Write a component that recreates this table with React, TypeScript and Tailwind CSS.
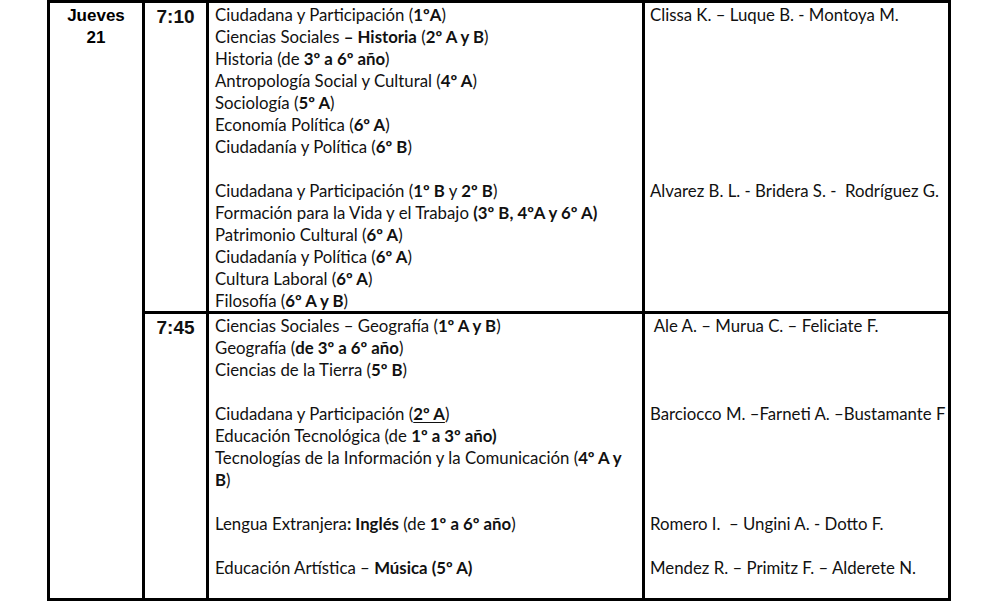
import type { ReactNode } from 'react';

type Line = { subject?: ReactNode; teacher?: string };

const firstBlock: Line[] = [
  {
    subject: (
      <>
        Ciudadana y Participación (<b>1ºA</b>)
      </>
    ),
    teacher: 'Clissa K. – Luque B. - Montoya M.',
  },
  {
    subject: (
      <>
        Ciencias Sociales <b>– Historia</b> (<b>2º A y B</b>)
      </>
    ),
  },
  {
    subject: (
      <>
        Historia (de <b>3º a 6º año</b>)
      </>
    ),
  },
  {
    subject: (
      <>
        Antropología Social y Cultural (<b>4º A</b>)
      </>
    ),
  },
  {
    subject: (
      <>
        Sociología (<b>5º A</b>)
      </>
    ),
  },
  {
    subject: (
      <>
        Economía Política (<b>6º A</b>)
      </>
    ),
  },
  {
    subject: (
      <>
        Ciudadanía y Política (<b>6º B</b>)
      </>
    ),
  },
  {},
  {
    subject: (
      <>
        Ciudadana y Participación (<b>1º B</b> y <b>2º B</b>)
      </>
    ),
    teacher: 'Alvarez B. L. - Bridera S. -  Rodríguez G.',
  },
  {
    subject: (
      <>
        Formación para la Vida y el Trabajo <b>(3º B, 4ºA y 6º A)</b>
      </>
    ),
  },
  {
    subject: (
      <>
        Patrimonio Cultural (<b>6º A</b>)
      </>
    ),
  },
  {
    subject: (
      <>
        Ciudadanía y Política (<b>6º A</b>)
      </>
    ),
  },
  {
    subject: (
      <>
        Cultura Laboral (<b>6º A</b>)
      </>
    ),
  },
  {
    subject: (
      <>
        Filosofía (<b>6º A y B</b>)
      </>
    ),
  },
];

const secondBlock: Line[] = [
  {
    subject: (
      <>
        Ciencias Sociales – Geografía (<b>1º A y B</b>)
      </>
    ),
    teacher: ' Ale A. – Murua C. – Feliciate F.',
  },
  {
    subject: (
      <>
        Geografía (<b>de 3º a 6º año</b>)
      </>
    ),
  },
  {
    subject: (
      <>
        Ciencias de la Tierra (<b>5º B</b>)
      </>
    ),
  },
  {},
  {
    subject: (
      <>
        Ciudadana y Participación (<b className="underline underline-offset-2">2º A</b>)
      </>
    ),
    teacher: 'Barciocco M. –Farneti A. –Bustamante F',
  },
  {
    subject: (
      <>
        Educación Tecnológica (de <b>1º a 3º año)</b>
      </>
    ),
  },
  {
    subject: (
      <>
        Tecnologías de la Información y la Comunicación (<b>4º A y</b>
      </>
    ),
  },
  {
    subject: (
      <>
        <b>B</b>)
      </>
    ),
  },
  {},
  {
    subject: (
      <>
        Lengua Extranjera<b>: Inglés</b> (de <b>1º a 6º año</b>)
      </>
    ),
    teacher: 'Romero I.  – Ungini A. - Dotto F.',
  },
  {},
  {
    subject: (
      <>
        Educación Artística – <b>Música (5º A)</b>
      </>
    ),
    teacher: 'Mendez R. – Primitz F. – Alderete N.',
  },
];

function TimeRow({ time, lines, height }: { time: string; lines: Line[]; height: string }) {
  return (
    <div className={`flex ${height}`}>
      <div className="w-[64px] shrink-0 border-r-[3px] border-black pt-[3px] text-center font-['Liberation_Sans',Arial,sans-serif] text-[19px] font-bold leading-[22px]">
        {time}
      </div>
      <div className="w-[436px] shrink-0 border-r-[3px] border-black pl-[6px] pt-[1px]">
        {lines.map((line, i) => (
          <div key={i} className="h-[22px] whitespace-pre leading-[22px]">
            {line.subject}
          </div>
        ))}
      </div>
      <div className="flex-1 pl-[5px] pt-[1px]">
        {lines.map((line, i) => (
          <div key={i} className="h-[22px] whitespace-pre leading-[22px]">
            {line.teacher}
          </div>
        ))}
      </div>
    </div>
  );
}

export default function App() {
  return (
    <div className="h-[602px] w-[999px] overflow-hidden bg-white text-[#111]">
      <div className="ml-[47px] flex w-[904px] border-[3px] border-black font-['Lato',sans-serif] text-[16.8px]">
        <div className="w-[95px] shrink-0 border-r-[3px] border-black pt-[2px] text-center font-['Liberation_Sans',Arial,sans-serif] text-[17px] font-bold leading-[22px] text-black">
          Jueves
          <br />
          21
        </div>
        <div className="flex flex-1 flex-col">
          <TimeRow time="7:10" lines={firstBlock} height="h-[308px]" />
          <div className="h-[3px] bg-black" />
          <TimeRow time="7:45" lines={secondBlock} height="h-[284px]" />
        </div>
      </div>
    </div>
  );
}
